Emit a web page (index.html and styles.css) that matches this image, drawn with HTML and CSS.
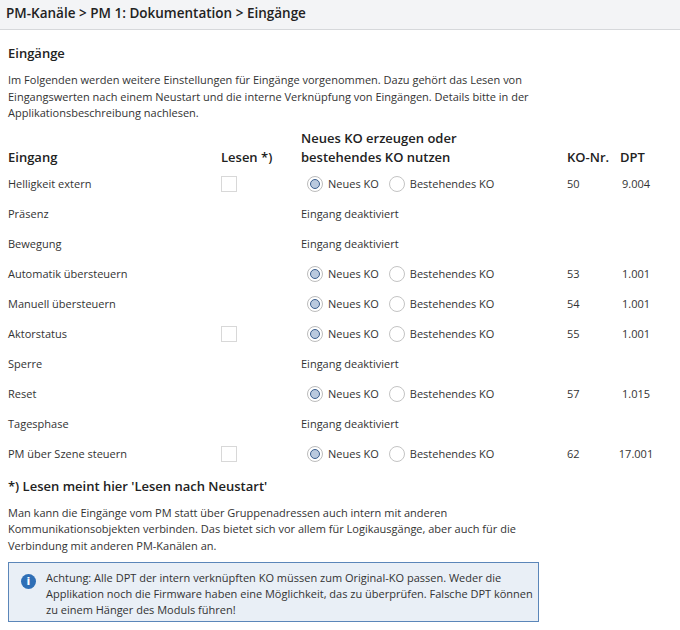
FILE: index.html
```html
<!DOCTYPE html>
<html lang="de">
<head>
<meta charset="utf-8">
<link rel="stylesheet" href="styles.css">
</head>
<body>
<div class="crumb">PM-Kanäle &gt; PM 1: Dokumentation &gt; Eingänge</div>
<div class="content">
  <h2 class="h">Eingänge</h2>
  <p class="txt">Im Folgenden werden weitere Einstellungen für Eingänge vorgenommen. Dazu gehört das Lesen von Eingangswerten nach einem Neustart und die interne Verknüpfung von Eingängen. Details bitte in der Applikationsbeschreibung nachlesen.</p>
  <div class="grid">
    <div class="th">Eingang</div>
    <div class="th">Lesen *)</div>
    <div class="th">Neues KO erzeugen oder<br>bestehendes KO nutzen</div>
    <div class="th">KO-Nr.</div>
    <div class="th dpt">DPT</div>

    <div class="c">Helligkeit extern</div>
    <div class="c"><span class="cb"></span></div>
    <div class="c"><span class="rb on"></span>Neues KO<span class="rb off"></span>Bestehendes KO</div>
    <div class="c">50</div>
    <div class="c dpt">9.004</div>

    <div class="c">Präsenz</div>
    <div class="c"></div>
    <div class="c">Eingang deaktiviert</div>
    <div class="c"></div>
    <div class="c"></div>

    <div class="c">Bewegung</div>
    <div class="c"></div>
    <div class="c">Eingang deaktiviert</div>
    <div class="c"></div>
    <div class="c"></div>

    <div class="c">Automatik übersteuern</div>
    <div class="c"></div>
    <div class="c"><span class="rb on"></span>Neues KO<span class="rb off"></span>Bestehendes KO</div>
    <div class="c">53</div>
    <div class="c dpt">1.001</div>

    <div class="c">Manuell übersteuern</div>
    <div class="c"></div>
    <div class="c"><span class="rb on"></span>Neues KO<span class="rb off"></span>Bestehendes KO</div>
    <div class="c">54</div>
    <div class="c dpt">1.001</div>

    <div class="c">Aktorstatus</div>
    <div class="c"><span class="cb"></span></div>
    <div class="c"><span class="rb on"></span>Neues KO<span class="rb off"></span>Bestehendes KO</div>
    <div class="c">55</div>
    <div class="c dpt">1.001</div>

    <div class="c">Sperre</div>
    <div class="c"></div>
    <div class="c">Eingang deaktiviert</div>
    <div class="c"></div>
    <div class="c"></div>

    <div class="c">Reset</div>
    <div class="c"></div>
    <div class="c"><span class="rb on"></span>Neues KO<span class="rb off"></span>Bestehendes KO</div>
    <div class="c">57</div>
    <div class="c dpt">1.015</div>

    <div class="c">Tagesphase</div>
    <div class="c"></div>
    <div class="c">Eingang deaktiviert</div>
    <div class="c"></div>
    <div class="c"></div>

    <div class="c">PM über Szene steuern</div>
    <div class="c"><span class="cb"></span></div>
    <div class="c"><span class="rb on"></span>Neues KO<span class="rb off"></span>Bestehendes KO</div>
    <div class="c">62</div>
    <div class="c dpt">17.001</div>
  </div>
  <h3 class="h note">*) Lesen meint hier 'Lesen nach Neustart'</h3>
  <p class="txt">Man kann die Eingänge vom PM statt über Gruppenadressen auch intern mit anderen Kommunikationsobjekten verbinden. Das bietet sich vor allem für Logikausgänge, aber auch für die Verbindung mit anderen PM-Kanälen an.</p>
  <div class="info">
    <span class="icon">i</span>
    <p class="info-txt">Achtung: Alle DPT der intern verknüpften KO müssen zum Original-KO passen. Weder die Applikation noch die Firmware haben eine Möglichkeit, das zu überprüfen. Falsche DPT können zu einem Hänger des Moduls führen!</p>
  </div>
</div>
</body>
</html>
```
FILE: styles.css
```css
html, body { margin: 0; padding: 0; background: #fff; }
body {
  font-family: "Open Sans", "Noto Sans", sans-serif;
  color: #333;
  font-size: 11px;
}
.crumb {
  height: 30px;
  box-sizing: border-box;
  background: #f3f4f6;
  border-bottom: 1px solid #d6d8db;
  padding: 2px 6px 0;
  font-size: 13.5px;
  font-weight: 600;
  line-height: 22px;
  color: #222;
}
.content { padding: 0 8px; }
.h {
  margin: 12px 0 0;
  font-size: 13px;
  font-weight: 600;
  line-height: 22px;
  color: #222;
}
.txt {
  margin: 8px 0 0;
  width: 570px;
  line-height: 16.5px;
}
.grid {
  display: grid;
  grid-template-columns: 213px 80px 266px 53px 32px;
  grid-template-rows: 47px;
  grid-auto-rows: 30px;
  margin-top: 0;
}
.th {
  grid-row: 1;
  align-self: end;
  font-size: 13px;
  font-weight: 600;
  line-height: 19px;
  color: #222;
  padding-bottom: 2px;
}
.c { display: flex; align-items: center; }
.dpt { justify-content: center; }
.cb {
  width: 16px; height: 16px; box-sizing: border-box;
  border: 1px solid #d8d8d8; background: #fff;
}
.rb {
  width: 16px; height: 16px; box-sizing: border-box;
  border: 1px solid #bcbcbc; border-radius: 50%;
  margin: 0 5px 0 6px; position: relative; background: #fff;
}
.rb.off { margin-left: 10px; border-color: #c4c4c4; }
.rb.on::after {
  content: ""; position: absolute; left: 2px; top: 2px;
  width: 10px; height: 10px; box-sizing: border-box;
  border-radius: 50%; border: 1.5px solid #3b5f8e; background: #b9c9de;
}
.note { margin-top: 6px; }
.info {
  margin-top: 8px;
  width: 531px; box-sizing: border-box;
  background: #e9eff6;
  border: 1px solid #5b86b9;
  display: flex; gap: 10px;
  padding: 7px 2px 3px 12px;
}
.icon {
  flex: none; width: 15px; height: 15px; border-radius: 50%;
  background: #2f6fb6; color: #fff; font-weight: 700; font-size: 11px;
  line-height: 15px; text-align: center; margin-top: 4px;
  font-family: "DejaVu Sans", sans-serif;
}
.info-txt { margin: 0; line-height: 16px; }
```
